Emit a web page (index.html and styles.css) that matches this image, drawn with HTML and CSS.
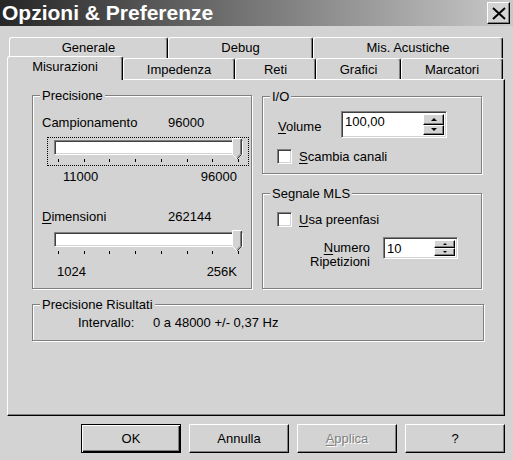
FILE: index.html
```
<html>
  <head>
    <meta charset="utf-8" />
    <link rel="stylesheet" href="styles.css">
  </head>

  <body>
    <div class="window">
      <header class="titlebar">
        <span class="title">Opzioni &amp; Preferenze</span>
        <div class="close">
          <svg width="14" height="13" viewBox="0 0 14 13">
            <path d="M1 1 L13 12 M13 1 L1 12" stroke="#000" stroke-width="2" fill="none" />
          </svg>
        </div>
      </header>

      <nav class="tabs">
        <div class="tab-row back">
          <div class="tab">Generale</div>
          <div class="tab">Debug</div>
          <div class="tab">Mis. Acustiche</div>
        </div>
        <div class="tab-row front">
          <div class="tab active">Misurazioni</div>
          <div class="tab">Impedenza</div>
          <div class="tab">Reti</div>
          <div class="tab">Grafici</div>
          <div class="tab">Marcatori</div>
        </div>
      </nav>

      <section class="panel">
        <div class="panel-grid">
          <div class="group precisione">
            <span class="group-title">Precisione</span>

            <div class="value-row first">
              <span>Campionamento</span>
              <span>96000</span>
            </div>
            <div class="slider focused">
              <div class="track"></div>
              <svg class="thumb" width="11" height="22" viewBox="0 0 11 22">
                <path d="M0.5 0.5 H9.5 V16.5 L5 21 L0.5 16.5 Z" fill="#d3d3d3" />
                <path d="M0.5 16.5 V0.5 H9.5 M0.5 16.5 L5 21" stroke="#fff" fill="none" />
                <path d="M9.5 1 V16.5 L5 21" stroke="#404040" fill="none" />
                <path d="M8.5 1.5 V16 L5 19.5" stroke="#808080" fill="none" />
              </svg>
              <div class="ticks"><i></i><i></i><i></i><i></i><i></i><i></i><i></i><i class="last"></i></div>
            </div>
            <div class="scale scale-camp"><span>11000</span><span>96000</span></div>

            <div class="value-row second">
              <span><u>D</u>imensioni</span>
              <span>262144</span>
            </div>
            <div class="slider">
              <div class="track"></div>
              <svg class="thumb" width="11" height="22" viewBox="0 0 11 22">
                <path d="M0.5 0.5 H9.5 V16.5 L5 21 L0.5 16.5 Z" fill="#d3d3d3" />
                <path d="M0.5 16.5 V0.5 H9.5 M0.5 16.5 L5 21" stroke="#fff" fill="none" />
                <path d="M9.5 1 V16.5 L5 21" stroke="#404040" fill="none" />
                <path d="M8.5 1.5 V16 L5 19.5" stroke="#808080" fill="none" />
              </svg>
              <div class="ticks"><i></i><i></i><i></i><i></i><i></i><i></i><i></i><i class="last"></i></div>
            </div>
            <div class="scale scale-dim"><span>1024</span><span>256K</span></div>
          </div>

          <div class="right-col">
            <div class="group io">
              <span class="group-title">I/O</span>
              <div class="volume-row">
                <span class="volume-label"><u>V</u>olume</span>
                <div class="spin spin-volume">
                  <span class="spin-value">100,00</span>
                  <div class="spin-buttons">
                    <div class="spin-btn"><i class="arrow up"></i></div>
                    <div class="spin-btn"><i class="arrow down"></i></div>
                  </div>
                </div>
              </div>
              <label class="check-row swap">
                <span class="check"></span>
                <span><u>S</u>cambia canali</span>
              </label>
            </div>

            <div class="group mls">
              <span class="group-title">Segnale MLS</span>
              <label class="check-row preenfasi">
                <span class="check"></span>
                <span><u>U</u>sa preenfasi</span>
              </label>
              <div class="repeat-row">
                <span class="repeat-label"><u>N</u>umero<br />Ripetizioni</span>
                <div class="spin spin-repeat">
                  <span class="spin-value">10</span>
                  <div class="spin-buttons">
                    <div class="spin-btn"><i class="arrow up small"></i></div>
                    <div class="spin-btn"><i class="arrow down small"></i></div>
                  </div>
                </div>
              </div>
            </div>
          </div>

          <div class="group risultati">
            <span class="group-title">Precisione Risultati</span>
            <div class="result-row">
              <span class="result-label">Intervallo:</span>
              <span>0 a 48000 +/- 0,37 Hz</span>
            </div>
          </div>
        </div>
      </section>

      <footer class="buttons">
        <div class="btn default">OK</div>
        <div class="btn">Annulla</div>
        <div class="btn disabled"><u>A</u>pplica</div>
        <div class="btn">?</div>
      </footer>
    </div>
  </body>
</html>
```

FILE: styles.css
```
:root {
  --face: #d3d3d3;
  --shadow: #808080;
  --dark: #404040;
  --light: #ffffff;
}

* {
  box-sizing: border-box;
}

body {
  margin: 0;
  width: 513px;
  height: 460px;
  overflow: hidden;
  background-color: var(--face);
  font-family: 'Liberation Sans', Arial, sans-serif;
  font-size: 13px;
  line-height: 15px;
  color: #000;
}

u {
  text-decoration-thickness: 1px;
  text-underline-offset: 2px;
}

.window {
  display: flex;
  flex-direction: column;
  height: 460px;
}

/* title bar */

.titlebar {
  height: 26px;
  display: flex;
  align-items: center;
  justify-content: space-between;
  padding: 0 3px 0 2px;
  background: linear-gradient(to right, #262626, #c9c9c9);
}

.title {
  color: #fff;
  font-weight: bold;
  font-size: 21px;
  line-height: 26px;
}

.close {
  width: 23px;
  height: 22px;
  display: flex;
  align-items: center;
  justify-content: center;
  background-color: var(--face);
  border-top: 1px solid var(--light);
  border-left: 1px solid var(--light);
  border-right: 1px solid #000;
  border-bottom: 1px solid #000;
  box-shadow: inset -1px -1px 0 var(--shadow);
}

/* tabs */

.tabs {
  margin-top: 11px;
}

.tab-row {
  display: grid;
  grid-template-rows: 21px;
  width: 496px;
}

.tab-row.back {
  margin-left: 9px;
  width: 494px;
  grid-template-columns: 159px 145px 1fr;
}

.tab-row.front {
  margin-left: 7px;
  grid-template-columns: 116px 112px 81px 85px 1fr;
}

.tab {
  height: 21px;
  text-align: center;
  padding-top: 2px;
  background-color: var(--face);
  border-top: 1px solid var(--light);
  border-left: 1px solid var(--light);
  border-right: 1px solid #000;
  border-radius: 3px 3px 0 0;
  box-shadow: inset -1px 0 0 var(--shadow);
}

.tab-row.front .tab {
  padding-top: 3px;
}

.tab-row.front .tab.active {
  position: relative;
  z-index: 1;
  height: 24px;
  margin-top: -2px;
  margin-bottom: -1px;
  padding-top: 2px;
}

/* panel */

.panel {
  width: 498px;
  height: 337px;
  margin-left: 7px;
  border-top: 1px solid var(--light);
  border-left: 1px solid var(--light);
  border-right: 1px solid #000;
  border-bottom: 1px solid #000;
  box-shadow: inset -1px -1px 0 var(--shadow);
  padding: 15px 0 0 24px;
}

.panel-grid {
  display: grid;
  grid-template-columns: 220px 220px;
  column-gap: 10px;
  row-gap: 15px;
}

.group {
  position: relative;
  border: 1px solid var(--shadow);
  box-shadow: inset 1px 1px 0 var(--light), 1px 1px 0 var(--light);
}

.group-title {
  position: absolute;
  top: -8px;
  left: 7px;
  padding: 0 2px;
  background-color: var(--face);
}

.precisione {
  height: 194px;
  padding: 19px 0 0 9px;
}

.value-row {
  display: grid;
  grid-template-columns: 126px auto;
}

.value-row.second {
  margin-top: 25px;
}

.slider {
  position: relative;
  width: 202px;
  height: 29px;
  margin-left: 5px;
  border: 1px dotted transparent;
}

.value-row.first + .slider {
  margin-top: 7px;
}

.value-row.second + .slider {
  margin-top: 5px;
}

.slider.focused {
  border-color: #000;
}

.track {
  width: 189px;
  height: 15px;
  margin: 2px 0 0 6px;
  background-color: #fff;
  border-top: 1px solid var(--shadow);
  border-left: 1px solid var(--shadow);
  border-right: 1px solid var(--light);
  border-bottom: 1px solid var(--light);
  box-shadow: inset 1px 1px 0 var(--dark), inset -1px -1px 0 var(--face);
}

.thumb {
  position: absolute;
  top: 0;
  left: 184px;
}

.ticks {
  display: flex;
  justify-content: space-between;
  width: 181px;
  margin: 4px 0 0 10px;
}

.ticks i {
  width: 1px;
  height: 3px;
  background-color: #000;
}

.scale {
  display: flex;
  justify-content: space-between;
  margin-top: 3px;
}

.scale-camp {
  margin-left: 21px;
  width: 174px;
}

.scale-dim {
  margin-top: 6px;
  margin-left: 15px;
  width: 180px;
}

/* right column */

.right-col {
  display: flex;
  flex-direction: column;
}

.io {
  height: 78px;
  margin-top: 1px;
  padding: 14px 0 0 15px;
}

.mls {
  height: 96px;
  margin-top: 19px;
  padding: 18px 0 0 14px;
}

.volume-row {
  display: flex;
}

.volume-label {
  width: 63px;
  margin-top: 8px;
}

.spin {
  display: flex;
  background-color: #fff;
  border-top: 1px solid var(--shadow);
  border-left: 1px solid var(--shadow);
  border-right: 1px solid var(--light);
  border-bottom: 1px solid var(--light);
  box-shadow: inset 1px 1px 0 var(--dark), inset -1px -1px 0 var(--face);
  padding: 2px;
}

.spin-volume {
  width: 106px;
  height: 27px;
}

.spin-repeat {
  width: 75px;
  height: 22px;
}

.spin-value {
  flex: 1;
  padding-left: 1px;
}

.spin-repeat .spin-value {
  padding-top: 1px;
}

.spin-buttons {
  display: flex;
  flex-direction: column;
  width: 21px;
}

.spin-btn {
  flex: 1;
  display: flex;
  align-items: center;
  justify-content: center;
  background-color: var(--face);
  border-top: 1px solid var(--light);
  border-left: 1px solid var(--light);
  border-right: 1px solid #000;
  border-bottom: 1px solid #000;
  box-shadow: inset -1px -1px 0 var(--shadow);
}

.arrow {
  width: 0;
  height: 0;
  border-left: 3px solid transparent;
  border-right: 3px solid transparent;
}

.arrow.up {
  border-bottom: 3px solid #000;
}

.arrow.down {
  border-top: 3px solid #000;
}

.arrow.small {
  border-left-width: 2px;
  border-right-width: 2px;
}

.arrow.up.small {
  border-bottom-width: 2px;
}

.arrow.down.small {
  border-top-width: 2px;
}

.check-row {
  display: flex;
  align-items: center;
  gap: 7px;
}

.swap {
  margin-top: 11px;
  margin-left: -1px;
}

.check {
  width: 15px;
  height: 15px;
  background-color: #fff;
  border-top: 1px solid var(--shadow);
  border-left: 1px solid var(--shadow);
  border-right: 1px solid var(--light);
  border-bottom: 1px solid var(--light);
  box-shadow: inset 1px 1px 0 var(--dark), inset -1px -1px 0 var(--face);
}

.repeat-row {
  display: flex;
  align-items: flex-start;
  gap: 13px;
  margin-top: 10px;
  padding-left: 31px;
}

.repeat-label {
  width: 62px;
  margin-top: 4px;
  text-align: right;
  line-height: 14px;
}

/* results */

.risultati {
  grid-column: 1 / -1;
  width: 452px;
  height: 37px;
  padding: 10px 0 0 45px;
}

.result-row {
  display: grid;
  grid-template-columns: 75px auto;
}

/* dialog buttons */

.buttons {
  display: flex;
  justify-content: flex-end;
  gap: 8px;
  margin-top: 8px;
  padding-right: 8px;
}

.btn {
  width: 100px;
  height: 29px;
  display: flex;
  align-items: center;
  justify-content: center;
  background-color: var(--face);
  border-top: 1px solid var(--light);
  border-left: 1px solid var(--light);
  border-right: 1px solid #000;
  border-bottom: 1px solid #000;
  box-shadow: inset -1px -1px 0 var(--shadow);
}

.btn.default {
  border: 1px solid #000;
  box-shadow: inset 1px 1px 0 var(--light), inset -1px -1px 0 #000, inset -2px -2px 0 var(--shadow);
}

.btn.disabled {
  color: var(--shadow);
  text-shadow: 1px 1px 0 var(--light);
}
```
